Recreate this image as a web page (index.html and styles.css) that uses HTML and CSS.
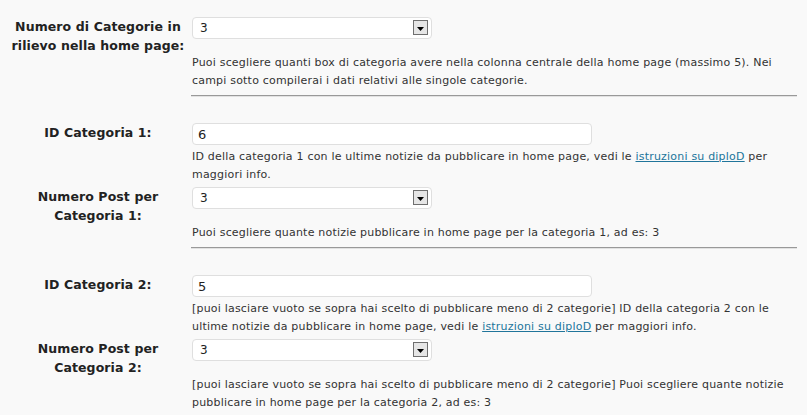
FILE: index.html
```html
<!DOCTYPE html>
<html lang="it">
<head>
    <meta charset="UTF-8">
    <meta name="viewport" content="width=device-width, initial-scale=1.0">
    <title>Opzioni home page</title>
    <link rel="stylesheet" href="styles.css">
</head>
<body>
    <div class="wrapper">
        <div class="row">
            <label class="label" for="num_cat">Numero di Categorie in rilievo nella home page:</label>
            <div class="field">
                <div class="select-box">
                    <select id="num_cat"><option>3</option></select>
                    <span class="arrow"><svg width="7" height="4" viewBox="0 0 7 4"><path d="M0 0h7L3.5 4z" fill="#000"/></svg></span>
                </div>
                <p class="desc desc-select">Puoi scegliere quanti box di categoria avere nella colonna centrale della home page (massimo 5). Nei campi sotto compilerai i dati relativi alle singole categorie.</p>
                <div class="sep"></div>
            </div>
        </div>

        <div class="row">
            <label class="label" for="cat1">ID Categoria 1:</label>
            <div class="field">
                <input class="text" id="cat1" type="text" value="6">
                <p class="desc">ID della categoria 1 con le ultime notizie da pubblicare in home page, vedi le <a href="#">istruzioni su diploD</a> per maggiori info.</p>
            </div>
        </div>

        <div class="row">
            <label class="label" for="post1">Numero Post per Categoria 1:</label>
            <div class="field">
                <div class="select-box">
                    <select id="post1"><option>3</option></select>
                    <span class="arrow"><svg width="7" height="4" viewBox="0 0 7 4"><path d="M0 0h7L3.5 4z" fill="#000"/></svg></span>
                </div>
                <p class="desc desc-select">Puoi scegliere quante notizie pubblicare in home page per la categoria 1, ad es: 3</p>
                <div class="sep"></div>
            </div>
        </div>

        <div class="row">
            <label class="label" for="cat2">ID Categoria 2:</label>
            <div class="field">
                <input class="text" id="cat2" type="text" value="5">
                <p class="desc">[puoi lasciare vuoto se sopra hai scelto di pubblicare meno di 2 categorie] ID della categoria 2 con le ultime notizie da pubblicare in home page, vedi le <a href="#">istruzioni su diploD</a> per maggiori info.</p>
            </div>
        </div>

        <div class="row">
            <label class="label" for="post2">Numero Post per Categoria 2:</label>
            <div class="field">
                <div class="select-box">
                    <select id="post2"><option>3</option></select>
                    <span class="arrow"><svg width="7" height="4" viewBox="0 0 7 4"><path d="M0 0h7L3.5 4z" fill="#000"/></svg></span>
                </div>
                <p class="desc desc-select">[puoi lasciare vuoto se sopra hai scelto di pubblicare meno di 2 categorie] Puoi scegliere quante notizie pubblicare in home page per la categoria 2, ad es: 3</p>
            </div>
        </div>
    </div>
</body>
</html>
```

FILE: styles.css
```css
body {
    margin: 0;
    padding: 0;
    background: #f9f9f9;
    font-family: "DejaVu Sans", Verdana, sans-serif;
    color: #333;
}

.wrapper {
    padding: 16px 10px 0 0;
}

.row {
    display: grid;
    grid-template-columns: 192px 1fr;
    margin-bottom: 2px;
}

.label {
    padding: 1px 6px 0 10px;
    text-align: center;
    font-weight: bold;
    font-size: 12.5px;
    letter-spacing: 0.1px;
    line-height: 19px;
    color: #222;
}

.field {
    min-width: 0;
}

/* select with the old windows style arrow */
.select-box {
    position: relative;
    width: 240px;
    margin-top: 1px;
}

.select-box select {
    -webkit-appearance: none;
    appearance: none;
    display: block;
    width: 240px;
    height: 22px;
    margin: 0;
    padding: 0 0 0 7px;
    border: 1px solid #dfdfdf;
    border-radius: 4px;
    background: #fff;
    font-family: inherit;
    font-size: 12px;
    color: #222;
}

.select-box .arrow {
    position: absolute;
    top: 3px;
    right: 4px;
    width: 15px;
    height: 15px;
    box-sizing: border-box;
    padding-top: 2px;
    border: 1px solid #6f6f6f;
    background: #e6e6e6;
    display: flex;
    align-items: center;
    justify-content: center;
}

.text {
    display: block;
    box-sizing: border-box;
    width: 400px;
    height: 22px;
    margin: 1px 0 0;
    padding: 0 0 0 5px;
    border: 1px solid #dfdfdf;
    border-radius: 4px;
    background: #fff;
    font-family: inherit;
    font-size: 13px;
    color: #222;
}

.desc {
    margin: 3px 0 0;
    font-size: 11px;
    letter-spacing: 0.2px;
    line-height: 18px;
}

.desc-select {
    margin-top: 15px;
}

.desc a {
    color: #21759b;
}

.sep {
    margin: 5px 0 23px -1px;
    border-top: 1px solid #999;
    border-bottom: 1px solid #e2e2e2;
}
```
